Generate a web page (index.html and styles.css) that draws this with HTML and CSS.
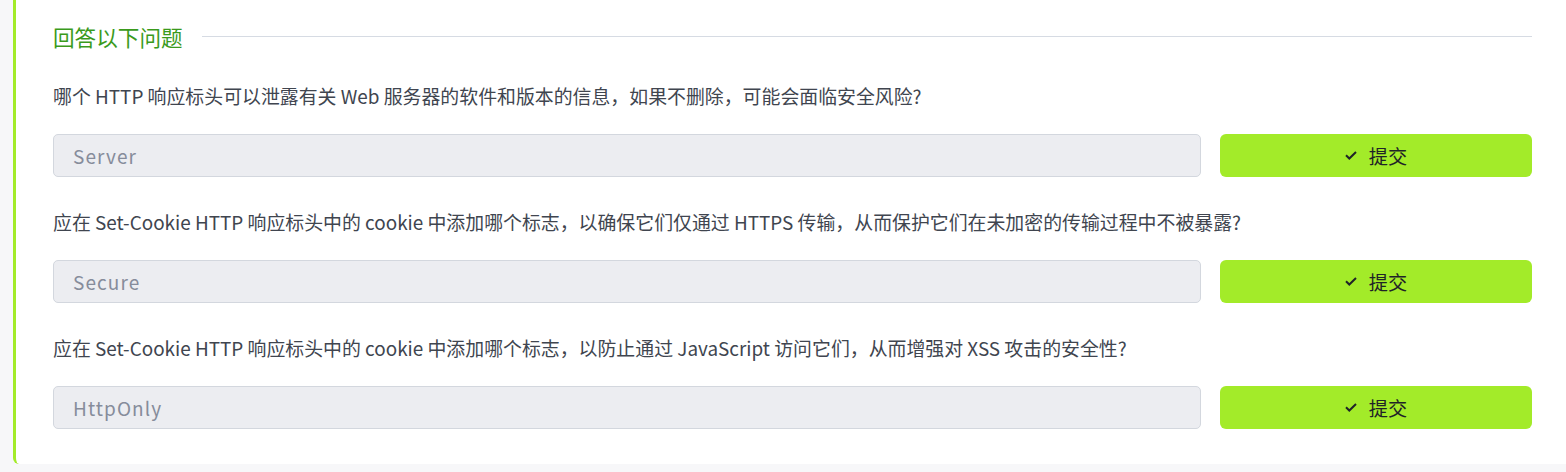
FILE: index.html
```html
<!DOCTYPE html>
<html lang="zh-CN">
<head>
<meta charset="utf-8">
<title>回答以下问题</title>
<link rel="stylesheet" href="styles.css">
</head>
<body>
<div class="card">
  <div class="heading">
    <h2 class="heading-title">回答以下问题</h2>
    <div class="heading-rule"></div>
  </div>
  <div class="qa">
    <p class="question">哪个 HTTP 响应标头可以泄露有关 Web 服务器的软件和版本的信息，如果不删除，可能会面临安全风险?</p>
    <div class="answer-row">
      <input class="answer" type="text" value="Server" readonly>
      <button class="submit" type="button"><svg class="check" width="12" height="9" viewBox="0 0 12 9"><polyline points="1,4.2 4.3,7.5 11,1" fill="none" stroke="#1f2328" stroke-width="2"/></svg><span>提交</span></button>
    </div>
  </div>
  <div class="qa">
    <p class="question">应在 Set-Cookie HTTP 响应标头中的 cookie 中添加哪个标志，以确保它们仅通过 HTTPS 传输，从而保护它们在未加密的传输过程中不被暴露?</p>
    <div class="answer-row">
      <input class="answer" type="text" value="Secure" readonly>
      <button class="submit" type="button"><svg class="check" width="12" height="9" viewBox="0 0 12 9"><polyline points="1,4.2 4.3,7.5 11,1" fill="none" stroke="#1f2328" stroke-width="2"/></svg><span>提交</span></button>
    </div>
  </div>
  <div class="qa">
    <p class="question">应在 Set-Cookie HTTP 响应标头中的 cookie 中添加哪个标志，以防止通过 JavaScript 访问它们，从而增强对 XSS 攻击的安全性?</p>
    <div class="answer-row">
      <input class="answer" type="text" value="HttpOnly" readonly>
      <button class="submit" type="button"><svg class="check" width="12" height="9" viewBox="0 0 12 9"><polyline points="1,4.2 4.3,7.5 11,1" fill="none" stroke="#1f2328" stroke-width="2"/></svg><span>提交</span></button>
    </div>
  </div>
</div>
</body>
</html>
```

FILE: styles.css
```css
html, body {
  margin: 0;
  padding: 0;
  background: #f7f7f9;
}
body {
  font-family: "Noto Sans CJK SC", "Noto Sans", sans-serif;
  color: #3b404c;
  height: 472px;
  overflow: hidden;
}
.card {
  margin-left: 13px;
  background: #ffffff;
  border-left: 3px solid #a3eb29;
  border-bottom-left-radius: 6px;
  padding: 22px 34px 35px 37px;
  display: flex;
  flex-direction: column;
  gap: 33px;
}
.heading {
  display: flex;
  align-items: center;
  gap: 19px;
  height: 30px;
  margin-bottom: -1px;
}
.heading-title {
  margin: 0;
  font-size: 21.6px;
  font-weight: 400;
  line-height: 30px;
  color: #3a9a1c;
  white-space: nowrap;
}
.heading-rule {
  flex: 1;
  height: 1px;
  background: #d6dbe3;
  margin-top: -2px;
}
.qa {
  display: flex;
  flex-direction: column;
  gap: 26px;
}
.question {
  margin: 0;
  font-size: 18.9px;
  line-height: 24px;
  color: #40454f;
  white-space: nowrap;
}
.answer-row {
  display: flex;
  gap: 19px;
  height: 43px;
}
.answer {
  flex: 1;
  min-width: 0;
  box-sizing: border-box;
  height: 43px;
  margin: 0;
  padding: 0 19px;
  border: 1px solid #d3d7de;
  border-radius: 5px;
  background: #ecedf1;
  font-family: "Noto Sans CJK SC", "Noto Sans", sans-serif;
  font-size: 19px;
  letter-spacing: 1.1px;
  color: #868c9b;
  outline: none;
}
.submit {
  width: 312px;
  flex: 0 0 312px;
  height: 43px;
  margin: 0;
  border: none;
  border-radius: 6px;
  background: #a3eb29;
  display: flex;
  align-items: center;
  justify-content: center;
  gap: 12px;
  font-family: "Noto Sans CJK SC", "Noto Sans", sans-serif;
  font-size: 19.2px;
  color: #1f2328;
  padding: 0;
}
.check {
  display: block;
}
```
